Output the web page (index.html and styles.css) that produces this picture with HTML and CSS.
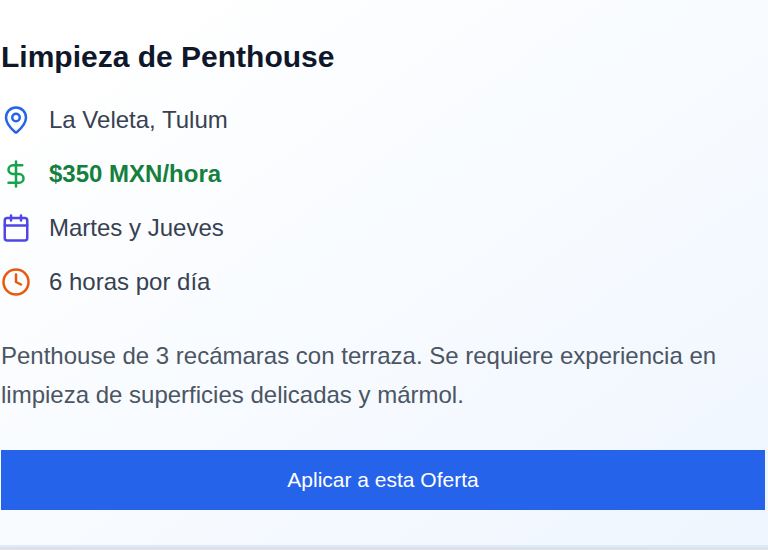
FILE: index.html
```html
<!DOCTYPE html>
<html lang="es">
<head>
    <meta charset="UTF-8">
    <meta name="viewport" content="width=device-width, initial-scale=1.0">
    <title>Limpieza de Penthouse</title>
    <link rel="stylesheet" href="styles.css">
</head>
<body>
    <article class="job-card">
        <h2 class="job-title">Limpieza de Penthouse</h2>

        <ul class="job-details">
            <li class="detail">
                <svg class="icon icon-location" viewBox="0 0 24 24" aria-hidden="true">
                    <path d="M20 10c0 4.993-5.539 10.193-7.399 11.799a1 1 0 0 1-1.202 0C9.539 20.193 4 14.993 4 10a8 8 0 0 1 16 0"/>
                    <circle cx="12" cy="10" r="3"/>
                </svg>
                <span>La Veleta, Tulum</span>
            </li>
            <li class="detail">
                <svg class="icon icon-pay" viewBox="0 0 24 24" aria-hidden="true">
                    <line x1="12" y1="2" x2="12" y2="22"/>
                    <path d="M17 5H9.500a3.500 3.500 0 0 0 0 7h5a3.500 3.500 0 0 1 0 7H6"/>
                </svg>
                <span class="pay">$350 MXN/hora</span>
            </li>
            <li class="detail">
                <svg class="icon icon-days" viewBox="0 0 24 24" aria-hidden="true">
                    <rect x="3" y="4" width="18" height="18" rx="2"/>
                    <path d="M16 2v4M8 2v4M3 10h18"/>
                </svg>
                <span>Martes y Jueves</span>
            </li>
            <li class="detail">
                <svg class="icon icon-hours" viewBox="0 0 24 24" aria-hidden="true">
                    <circle cx="12" cy="12" r="10"/>
                    <polyline points="12 6 12 12 16 14"/>
                </svg>
                <span>6 horas por día</span>
            </li>
        </ul>

        <p class="job-description">Penthouse de 3 recámaras con terraza. Se requiere experiencia en limpieza de superficies delicadas y mármol.</p>

        <button type="button" class="btn">Aplicar a esta Oferta</button>
    </article>
</body>
</html>
```

FILE: styles.css
```css
* {
    box-sizing: border-box;
}
body {
    margin: 0;
    font-family: "Liberation Sans", Arial, sans-serif;
    font-size: 24px;
    color: #374151;
    background: #e0e1e4;
}
.job-card {
    padding: 36px 3px 35px 1px;
    border-bottom: 2px solid #dbeafe;
    background: linear-gradient(to bottom right, #fff 10%, #eff6ff);
}
.job-title {
    margin: 0 0 24px;
    font-size: 30px;
    line-height: 42px;
    color: #0f172a;
}
.job-details {
    display: flex;
    flex-direction: column;
    gap: 18px;
    margin: 0 0 36px;
    padding: 0;
    list-style: none;
}
.detail {
    display: flex;
    align-items: center;
    gap: 18px;
    line-height: 36px;
}
.icon {
    width: 30px;
    height: 30px;
    fill: none;
    stroke: currentColor;
    stroke-width: 2;
    stroke-linecap: round;
    stroke-linejoin: round;
}
.icon-location {
    color: #2563eb;
}
.icon-pay {
    color: #16a34a;
}
.icon-days {
    color: #4f46e5;
}
.icon-hours {
    color: #ea580c;
}
.pay {
    font-weight: bold;
    color: #15803d;
}
.job-description {
    margin: 0 0 36px;
    line-height: 39px;
    color: #4b5563;
}
.btn {
    display: block;
    width: 100%;
    height: 60px;
    padding: 0 24px;
    border: none;
    font-family: inherit;
    font-size: 21px;
    color: #fff;
    background: #2563eb;
    cursor: pointer;
}
.btn:hover {
    background: #1d4ed8;
}
```
